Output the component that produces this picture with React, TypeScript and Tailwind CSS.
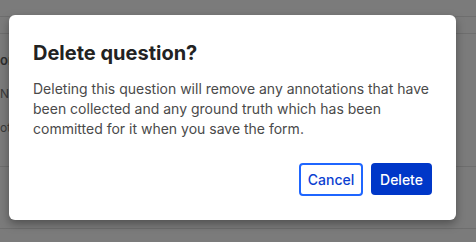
import React from "react";

export default function App() {
  return (
    <div className="relative w-[476px] h-[242px] overflow-hidden bg-[#7b7b7b] font-['Inter',sans-serif]">
      {/* background page (dimmed) */}
      <div className="flex flex-col">
        <div className="h-[16px]" />
        <div className="h-[17px] border-t border-[#6e6e6e]" />
        <div className="h-[133px] border-t border-[#6e6e6e] flex flex-col pt-[17px] gap-[16px] text-[13px] text-[#2e2e2e] leading-[18px]">
          <div className="font-semibold">or</div>
          <div className="text-[12px] text-[#3a3a3a]">NI</div>
          <div className="text-[12px] text-[#3a3a3a]">ot</div>
        </div>
        <div className="h-[62px] border-t border-[#6e6e6e]" />
        <div className="border-t border-[#6e6e6e]" />
      </div>

      {/* modal */}
      <div className="absolute left-[9px] top-[15px] w-[447px] h-[205px] rounded-[6px] bg-white shadow-[0_4px_10px_rgba(0,0,0,0.35)] p-6 flex flex-col">
        <h2 className="text-[20px] leading-[28px] font-bold text-[#222222]">Delete question?</h2>
        <p className="mt-3 text-[14px] leading-[20px] text-[#4a4a4a]">
          Deleting this question will remove any annotations that have been collected and any ground truth which has been committed for it when you save the form.
        </p>
        <div className="mt-auto flex justify-end gap-2">
          <button className="h-[33px] w-[64px] rounded-[4px] border-2 border-[#1f66ff] text-[#0b3fd1] text-[14px] font-medium bg-white">
            Cancel
          </button>
          <button className="h-[32px] w-[61px] rounded-[4px] bg-[#0037c8] text-white text-[14px] font-medium">
            Delete
          </button>
        </div>
      </div>
    </div>
  );
}
